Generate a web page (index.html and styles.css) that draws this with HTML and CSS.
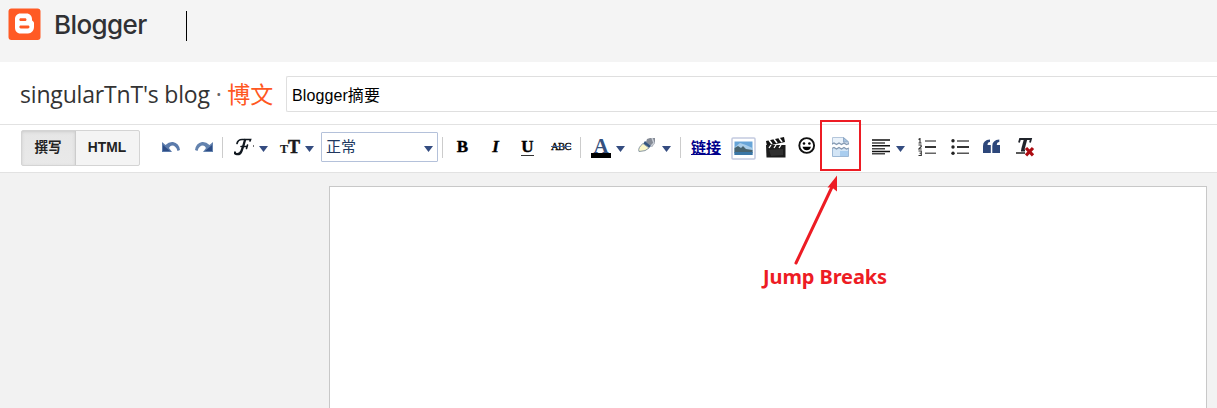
FILE: index.html
```html
<!DOCTYPE html>
<html lang="zh-CN">
<head>
<meta charset="utf-8">
<title>Blogger</title>
<link rel="stylesheet" href="styles.css">
</head>
<body>
<header class="brand">
  <svg class="logo" width="34" height="34" viewBox="0 0 34 34"><rect x=".5" y=".5" width="32" height="31.5" rx="3" fill="#ff5a24"/><path fill="#fff" fill-rule="evenodd" d="M12.500 5.500H18.500C22 5.500 24 8 24 11V12C24 13.500 26 13 26 15V19C26 22.500 23.500 25.500 20 25.500H12.500C9 25.500 7 23 7 19.500V11C7 8 9 5.500 12.500 5.500ZM12.800 10.200C10.800 10.200 10.800 13 12.800 13H17C19 13 19 10.200 17 10.200ZM12.800 17.600C10.800 17.600 10.800 20.400 12.800 20.400H20C22 20.400 22 17.600 20 17.600Z"/></svg>
  <span class="brand-name">Blogger</span>
  <span class="brand-rule"></span>
</header>
<section class="titlebar">
  <h1 class="blog">singularTnT's blog <span class="dot">·</span> <span class="crumb">博文</span></h1>
  <div class="title-input">Blogger摘要</div>
</section>
<nav class="toolbar">
  <div class="modes"><span class="mode active">撰写</span><span class="mode html">HTML</span></div>
  <svg class="icon undo" width="18" height="20" viewBox="0 0 18 20"><path d="M0 4L3.500 7Q7 3.500 11 4Q17 5 18 12L15.500 13Q14 7.500 10 7.500Q8 7.500 7 10L10 14H0Z" fill="#5b7bab"/><path d="M1 7V13H8Z" fill="#2d4d86"/></svg>
  <svg class="icon redo" width="18" height="20" viewBox="0 0 18 20"><path d="M18 4L14.500 7Q11 3.500 7 4Q1 5 0 12L2.500 13Q4 7.500 8 7.500Q10 7.500 11 10L8 14H18Z" fill="#6483ae"/><path d="M17 7V13H10Z" fill="#2d4d86"/></svg>
  <i class="sep s1"></i>
  <svg class="icon font" width="22" height="22" viewBox="0 0 22 22"><g fill="none" stroke="#111820" stroke-linecap="round"><path d="M3 6.500Q4 2.500 8 2.500H16.500L16 4" stroke-width="1.700"/><path d="M11 3Q9.500 9 7.500 14Q6 18 2 17Q0.500 16.500 1 15.500" stroke-width="2.300"/><path d="M7 9.500H13M13.500 8L12.500 11.500" stroke-width="1.600"/></g><path d="M19.500 8V10" stroke="#777"/></svg>
  <i class="tri t1"></i>
  <span class="size"><span class="size-s">T</span><span class="size-l">T</span></span>
  <i class="tri t2"></i>
  <div class="select"><span>正常</span><i class="tri"></i></div>
  <i class="sep s2"></i>
  <b class="letter bold">B</b>
  <b class="letter italic">I</b>
  <b class="letter under">U</b>
  <span class="strike">ABC</span>
  <i class="sep s3"></i>
  <span class="color">A</span>
  <i class="tri t3"></i>
  <svg class="icon marker" width="18" height="20" viewBox="0 0 18 20"><path d="M9 2L12 1H17V6L14 10L8 5Z" fill="#858b96"/><path d="M14 1L16 6L13 9" stroke="#c9ced6" stroke-width="1.500" fill="none"/><path d="M7 4L13 9L11 11L5 7Z" fill="#34557f"/><path d="M5 6.500L11 11Q8 14.500 1 14.500Q-.5 11 5 6.500Z" fill="#fbf7c8" stroke="#8998a5"/></svg>
  <i class="tri t4"></i>
  <i class="sep s4"></i>
  <a class="link">链接</a>
  <svg class="icon photo" width="25" height="23" viewBox="0 0 25 23"><rect x="1" y="1" width="23" height="21" rx="1" fill="#fff" stroke="#c3cadf" stroke-width="1.500"/><path fill="#68a5d8" d="M3.500 4.500H21.500V18H3.500Z"/><path fill="#a9cde9" d="M4 10L9 6L15 8L21.500 11V14H4Z"/><path fill="#48636e" d="M3.500 11L7 9L10 11L12 9L15 12L21.500 13V16H3.500Z"/><path fill="#3a76a5" d="M3.500 15H21.500V18H3.500Z"/></svg>
  <svg class="icon clap" width="20" height="21" viewBox="0 0 20 21"><path fill="#111" d="M0 4L18 0L19 5L1 9Z"/><path d="M3 3L6 7M8 2L11 6M13 1L16 5" stroke="#fff" stroke-width="1.600"/><path fill="#1c1c1c" d="M0 8H19.500V20.500H.5Z"/><path d="M3 11L5 8M8 11L10 8M13 11L15 8" stroke="#fff" stroke-width="1.300"/><path d="M3 13L17 12V18L5 19Z" fill="#303030"/></svg>
  <svg class="icon smile" width="18" height="18" viewBox="0 0 18 18"><circle cx="8.700" cy="8.500" r="7.400" fill="none" stroke="#111" stroke-width="1.900"/><circle cx="6" cy="6.500" r="1.300"/><circle cx="11.400" cy="6.500" r="1.300"/><path d="M4.500 9.800H13Q12 13.300 8.700 13.300Q5.500 13.300 4.500 9.800Z"/></svg>
  <span class="jump">
    <svg width="18" height="20" viewBox="0 0 18 20"><path d="M.5 7.500V.5H11.500L16.500 5V7.500" fill="#eaf2fa" stroke="#b4c6db"/><path d="M11.500 .5V5H16.500Z" fill="#a6c2de" stroke="#91aac7"/><path d="M0 7L2 6L4.500 7.500L7 6L9.500 7.500L12 6L14.500 7.500L17 6.500" fill="none" stroke="#8297b0" stroke-width="1.200"/><path d="M.5 11.500L2 10.500L4.500 12L7 10.500L9.500 12L12 10.500L14.500 12L16.500 11V19.500H.5Z" fill="#d3e5f6"/><path d="M8 14H16V19H8Z" fill="#a9cdef"/><path d="M.5 12V19.500H16.500V12" fill="none" stroke="#9db8d5"/><path d="M0 11.500L2 10.500L4.500 12L7 10.500L9.500 12L12 10.500L14.500 12L17 11" fill="none" stroke="#8297b0" stroke-width="1.200"/></svg>
    <span class="callout-box"></span>
    <svg class="arrow" width="60" height="96" viewBox="0 0 60 96"><path d="M16 90L52 14" stroke="#ed1c24" stroke-width="3" stroke-linecap="round"/><path d="M57 2.500L47.500 14.500L52 14.500L57 18.500Z" fill="#ed1c24"/></svg>
    <span class="callout-text">Jump Breaks</span>
  </span>
  <svg class="icon align" width="18" height="16" viewBox="0 0 18 16"><path d="M0 1H18M0 6.800H18M0 12.500H18" stroke="#111" stroke-width="1.500"/><path d="M0 4H13M0 9.700H13M0 14.800H13" stroke="#444" stroke-width="1.500"/></svg>
  <i class="tri t5"></i>
  <svg class="icon ol" width="18" height="19" viewBox="0 0 18 19"><path d="M7 3H18M7 15.300H18" stroke="#666" stroke-width="1.500"/><path d="M7 9H18" stroke="#111" stroke-width="1.700"/><path d="M.5 1.500L2 .5V5M.5 5H3.500M.5 7H3L3.300 8.500L.7 11H3.700M.5 13H3.300V17.500H.5M1.500 15.200H3" fill="none" stroke="#333" stroke-width="1.100"/></svg>
  <svg class="icon ul" width="18" height="19" viewBox="0 0 18 19"><path d="M6 3H18M6 15.300H18" stroke="#555" stroke-width="1.500"/><path d="M6 9H18" stroke="#111" stroke-width="1.700"/><g fill="#222"><circle cx="2" cy="2.700" r="1.700"/><circle cx="2" cy="9" r="1.700"/><circle cx="2" cy="15.200" r="1.700"/></g></svg>
  <svg class="icon quote" width="18" height="15" viewBox="0 0 18 15"><path d="M7 .5V3Q4.500 3 4.500 6H7.800V14H0V7Q0 1 7 .5ZM16.300 .5V3Q13.800 3 13.800 6H17V14H9.300V7Q9.300 1 16.300 .5Z" fill="#2d477a"/></svg>
  <svg class="icon clear" width="20" height="20" viewBox="0 0 20 20"><path d="M3 4.500L4 1H15L14 4.500M9.500 1.500L6.700 12M5 12.500H9" fill="none" stroke="#20242b" stroke-width="1.800"/><path d="M9.500 1.500L6.700 12" stroke="#20242b" stroke-width="3.300"/><path d="M0 15H9" stroke="#222" stroke-width="1.500"/><path d="M10 10L17 17.300M17 10L10 17.300" stroke="#ad0c12" stroke-width="3.200"/></svg>
</nav>
<main class="workspace"><div class="editor"></div></main>
</body>
</html>
```

FILE: styles.css
```css
* { box-sizing: border-box; }
body {
  margin: 0;
  height: 408px;
  overflow: hidden;
  display: flex;
  flex-direction: column;
  background: #f2f2f2;
  font-family: "Liberation Sans", "Noto Sans CJK SC", sans-serif;
}
.brand {
  flex: none;
  height: 62px;
  padding: 8px 0 0 8px;
  display: flex;
  align-items: flex-start;
  background: #f4f4f4;
}
.logo { flex: none; }
.brand-name {
  width: 92px;
  margin-left: 12px;
  font: 500 26px/34px Inter, sans-serif;
  letter-spacing: -0.6px;
  color: #303134;
  white-space: nowrap;
}
.brand-rule { width: 1px; height: 30px; margin: 3px 0 0 40px; background: #000; }
.titlebar {
  flex: none;
  height: 63px;
  padding: 14px 0 0 20px;
  display: flex;
  align-items: flex-start;
  background: #fff;
  border-bottom: 1px solid #e2e2e2;
}
.blog {
  width: 266px;
  margin: 0;
  font: 400 23px/36px "Open Sans", "Noto Sans CJK SC", sans-serif;
  letter-spacing: -0.18px;
  color: #333;
  white-space: nowrap;
}
.dot { color: #666; }
.crumb { color: #ff5722; }
.title-input {
  flex: 1;
  height: 36px;
  padding-left: 5px;
  font-size: 16px;
  letter-spacing: 0.1px;
  line-height: 37px;
  color: #000;
  border: 1px solid #dfdfdf;
  border-right: 0;
  border-radius: 2px 0 0 2px;
}
.toolbar {
  flex: none;
  height: 48px;
  padding-left: 21px;
  display: flex;
  align-items: flex-start;
  background: #fff;
  border-bottom: 1px solid #e2e2e2;
}
.toolbar > * { flex: none; }
.modes {
  display: flex;
  width: 119px;
  height: 36px;
  margin-top: 5px;
  border: 1px solid #d4d4d4;
  border-radius: 2px;
  background: #f4f4f4;
  font-size: 13.8px;
  font-weight: 700;
  line-height: 33px;
  text-align: center;
  color: #222;
}
.mode { flex: 1; }
.mode.html { padding-right: 1px; }
.mode.active {
  flex: 0 0 54px;
  padding-right: 1px;
  font-size: 13.5px;
  background: linear-gradient(#e6e6e6, #e9e9e9);
  border-right: 1px solid #ccc;
  box-shadow: inset 0 1px 3px #ccc;
}
.undo { margin: 13px 0 0 22px; }
.redo { margin: 13px 0 0 15px; }
.sep { width: 1px; height: 21px; margin-top: 12px; background: #ccc; }
.s1 { margin-left: 9px; }
.font { margin: 12px 0 0 11px; }
.tri {
  width: 9px;
  height: 6px;
  margin-top: 21px;
  background: #344c80;
  clip-path: polygon(0 0, 100% 0, 50% 100%);
}
.t1 { margin-left: 3px; }
.size {
  width: 19px;
  height: 22px;
  margin: 11px 0 0 12px;
  display: flex;
  align-items: baseline;
  font-family: "Liberation Serif", serif;
  font-weight: 700;
  line-height: 22px;
  color: #1a1a1a;
}
.size-s { font-size: 12px; -webkit-text-stroke: 0.2px #1a1a1a; }
.size-l { font-size: 18px; -webkit-text-stroke: 0.5px #1a1a1a; }
.t2 { margin-left: 6px; }
.select {
  display: flex;
  justify-content: space-between;
  width: 117px;
  height: 30px;
  margin: 7px 0 0 7px;
  padding: 0 4px 0 4px;
  border: 1px solid #b4c1da;
  border-radius: 1px;
  font-size: 15px;
  line-height: 27px;
  color: #20385f;
}
.select .tri { margin-top: 13px; }
.s2 { margin-left: 4px; }
.letter {
  height: 18px;
  margin-top: 12px;
  font: 700 17px/20px "Liberation Serif", serif;
  text-align: center;
  color: #000;
  -webkit-text-stroke: 0.4px #000;
}
.bold { width: 13px; margin-left: 13px; }
.italic { width: 13px; margin-left: 20px; font-style: italic; }
.under { width: 13px; margin-left: 19px; height: 19px; border-bottom: 1px solid #333; }
.strike {
  width: 20px;
  margin: 12px 0 0 17px;
  font: 10.5px/20px "Liberation Serif", serif;
  letter-spacing: -0.5px;
  text-align: center;
  text-decoration: line-through #45659a;
  color: #000;
  -webkit-text-stroke: 0.3px #000;
}
.s3 { margin-left: 9px; }
.color {
  width: 20px;
  height: 21px;
  margin: 12px 0 0 10px;
  border-bottom: 5px solid #000;
  font: 700 21px/18px "Liberation Serif", serif;
  text-align: center;
  color: #35507e;
}
.t3 { margin-left: 5px; }
.marker { margin: 12px 0 0 13px; }
.t4 { margin-left: 6px; }
.s4 { margin-left: 9px; }
.link {
  width: 30px;
  margin: 12px 0 0 10px;
  font-size: 15px;
  font-weight: 700;
  line-height: 21px;
  color: #00008b;
  text-decoration: underline;
}
.photo { margin: 12px 0 0 10px; }
.clap { margin: 12px 0 0 10px; }
.smile { margin: 12px 0 0 12px; }
.jump { position: relative; width: 18px; height: 20px; margin: 12px 0 0 16px; }
.jump svg { display: block; }
.callout-box {
  position: absolute;
  left: -12px;
  top: -17px;
  width: 41px;
  height: 51px;
  border: 2px solid #ed1c24;
}
.jump .arrow { position: absolute; left: -52px; top: 36px; }
.callout-text {
  position: absolute;
  left: -69px;
  top: 126px;
  font: 700 20px/28px "Noto Sans", sans-serif;
  letter-spacing: -0.1px;
  color: #ed1c24;
  white-space: nowrap;
}
.align { margin: 14px 0 0 22px; }
.t5 { margin-left: 6px; }
.ol { margin: 13px 0 0 13px; }
.ul { margin: 13px 0 0 15px; }
.quote { margin: 14px 0 0 14px; }
.clear { margin: 13px 0 0 15px; }
.workspace { flex: 1; display: flex; padding: 13px 10px 0 329px; }
.editor { flex: 1; background: #fff; border: 1px solid #c8c8c8; border-bottom: 0; }
```
